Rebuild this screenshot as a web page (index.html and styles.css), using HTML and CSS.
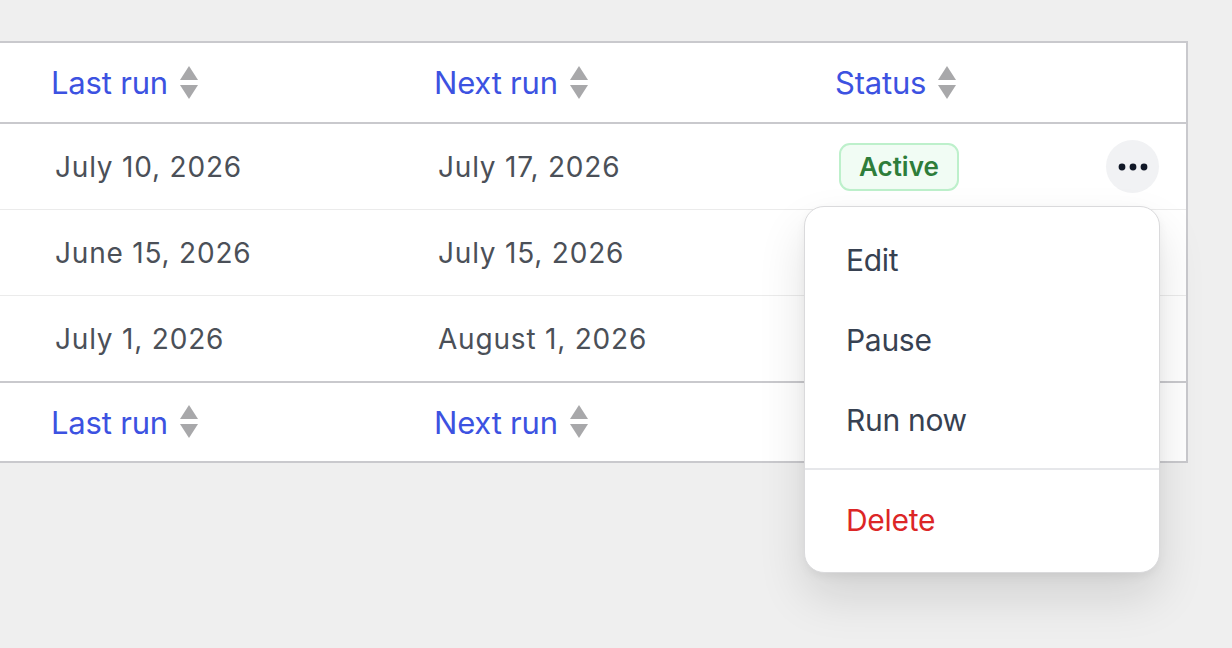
FILE: index.html
```html
<!DOCTYPE html>
<html lang="en">
<head>
    <meta charset="UTF-8">
    <meta name="viewport" content="width=device-width, initial-scale=1.0">
    <title>Scheduled jobs</title>
    <link rel="stylesheet" href="styles.css">
</head>
<body>
    <div class="page">
        <table class="jobs">
            <colgroup>
                <col class="col-last">
                <col class="col-next">
                <col class="col-status">
                <col class="col-actions">
            </colgroup>
            <thead>
                <tr>
                    <th><button class="sort">Last run <svg class="sort-icon" viewBox="0 0 18 34"><polygon points="9,0 18,14 0,14"/><polygon points="0,19 18,19 9,33"/></svg></button></th>
                    <th><button class="sort">Next run <svg class="sort-icon" viewBox="0 0 18 34"><polygon points="9,0 18,14 0,14"/><polygon points="0,19 18,19 9,33"/></svg></button></th>
                    <th><button class="sort">Status <svg class="sort-icon" viewBox="0 0 18 34"><polygon points="9,0 18,14 0,14"/><polygon points="0,19 18,19 9,33"/></svg></button></th>
                    <th></th>
                </tr>
            </thead>
            <tbody>
                <tr>
                    <td>July 10, 2026</td>
                    <td>July 17, 2026</td>
                    <td><span class="badge">Active</span></td>
                    <td class="cell-actions">
                        <button class="more" aria-label="More">
                            <svg viewBox="0 0 30 8" width="30" height="8"><circle cx="4" cy="4" r="3.4"/><circle cx="15" cy="4" r="3.4"/><circle cx="26" cy="4" r="3.4"/></svg>
                        </button>
                    </td>
                </tr>
                <tr>
                    <td>June 15, 2026</td>
                    <td>July 15, 2026</td>
                    <td></td>
                    <td></td>
                </tr>
                <tr>
                    <td>July 1, 2026</td>
                    <td>August 1, 2026</td>
                    <td></td>
                    <td></td>
                </tr>
            </tbody>
            <tfoot>
                <tr>
                    <th><button class="sort">Last run <svg class="sort-icon" viewBox="0 0 18 34"><polygon points="9,0 18,14 0,14"/><polygon points="0,19 18,19 9,33"/></svg></button></th>
                    <th><button class="sort">Next run <svg class="sort-icon" viewBox="0 0 18 34"><polygon points="9,0 18,14 0,14"/><polygon points="0,19 18,19 9,33"/></svg></button></th>
                    <th></th>
                    <th></th>
                </tr>
            </tfoot>
        </table>

        <!-- row actions dropdown, open under the first row's button -->
        <div class="menu">
            <a class="menu-item">Edit</a>
            <a class="menu-item">Pause</a>
            <a class="menu-item">Run now</a>
            <div class="menu-sep"></div>
            <a class="menu-item danger">Delete</a>
        </div>
    </div>
</body>
</html>
```

FILE: styles.css
```css
html, body {
    height: 100%;
}
body {
    margin: 0;
    background-color: #efefef;
    font-family: Inter, "Noto Sans", sans-serif;
}
.page {
    position: relative;
    min-height: 100%;
    box-sizing: border-box;
    padding-top: 41px;
}
.jobs {
    margin-left: -22px;
    width: 1210px;
    table-layout: fixed;
    border-collapse: separate;
    border-spacing: 0;
    border: 2px solid #c9c9cd;
    background-color: #fff;
}
.col-last { width: 434px; }
.col-next { width: 401px; }
.col-status { width: 245px; }
.col-actions { width: 126px; }

th, td {
    padding: 0 24px;
    text-align: left;
    font-size: 28px;
}
th:first-child, td:first-child {
    padding-left: 75px;
}
thead th {
    height: 79px;
    border-bottom: 2px solid #c9c9cd;
}
tfoot th {
    height: 78px;
    border-top: 2px solid #c9c9cd;
}
tbody td {
    height: 85px;
    color: #4b5058;
    letter-spacing: 0.8px;
    border-bottom: 1px solid #ebebeb;
}
tbody tr:last-child td {
    border-bottom: none;
}
.sort {
    display: inline-flex;
    align-items: center;
    gap: 12px;
    margin-left: -4px;
    padding: 0;
    border: none;
    background: none;
    font: inherit;
    font-size: 31px;
    font-weight: 400;
    letter-spacing: -0.2px;
    color: #3c52e1;
    cursor: pointer;
}
.sort-icon {
    width: 18px;
    height: 34px;
    fill: #a8a8aa;
}
.badge {
    display: inline-block;
    height: 48px;
    line-height: 44px;
    padding: 0 18px;
    box-sizing: border-box;
    border: 2px solid #bdf0cb;
    border-radius: 11px;
    background-color: #f1fcf4;
    color: #2e7d3a;
    font-size: 26px;
    font-weight: 600;
    letter-spacing: 0;
}
.cell-actions {
    padding-right: 27px;
}
.more {
    display: flex;
    align-items: center;
    justify-content: center;
    margin-left: auto;
    width: 53px;
    height: 53px;
    padding: 0;
    border: none;
    border-radius: 50%;
    background-color: #f1f2f4;
    cursor: pointer;
}
.more svg {
    fill: #111827;
}
.menu {
    position: absolute;
    top: 206px;
    left: 804px;
    width: 356px;
    box-sizing: border-box;
    padding: 13px 0 12px;
    border: 1px solid #dadadc;
    border-radius: 20px;
    background-color: #fff;
    box-shadow: 0 24px 48px rgba(0, 0, 0, 0.12), 0 4px 10px rgba(0, 0, 0, 0.05);
    letter-spacing: -0.3px;
    z-index: 10;
}
.menu-item {
    display: flex;
    align-items: center;
    height: 80px;
    padding-left: 41px;
    color: #374151;
    font-size: 30px;
    cursor: pointer;
}
.menu-item.danger {
    color: #dc2626;
}
.menu-sep {
    height: 2px;
    margin: 8px 0 10px;
    background-color: #e6e7ea;
}
```
